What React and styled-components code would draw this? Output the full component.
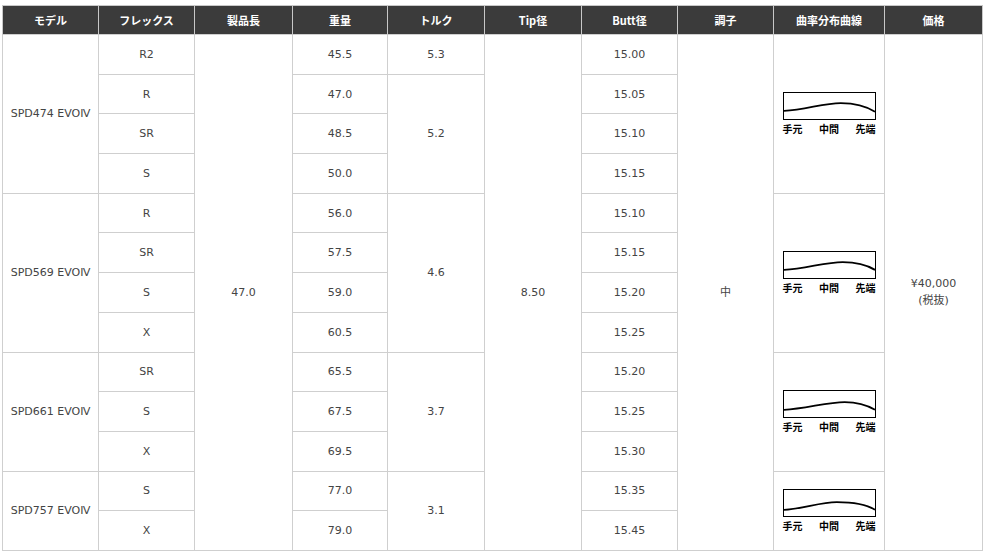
import React from "react";
import styled, { createGlobalStyle } from "styled-components";

const GlobalStyle = createGlobalStyle`
  body {
    margin: 0;
    background: #fff;
    font-family: "DejaVu Sans", "Noto Sans CJK JP", sans-serif;
  }
`;

const models = [
  {
    name: "SPD474 EVOⅣ",
    curve: "M0,18 C22,17 40,10 58,10 C74,10 84,13 93,19",
    rows: [
      { flex: "R2", weight: "45.5", torque: "5.3", span: 1, butt: "15.00" },
      { flex: "R", weight: "47.0", torque: "5.2", span: 3, butt: "15.05" },
      { flex: "SR", weight: "48.5", butt: "15.10" },
      { flex: "S", weight: "50.0", butt: "15.15" },
    ],
  },
  {
    name: "SPD569 EVOⅣ",
    curve: "M0,18 C22,17 42,10 60,10 C76,10 85,13 93,18",
    rows: [
      { flex: "R", weight: "56.0", torque: "4.6", span: 4, butt: "15.10" },
      { flex: "SR", weight: "57.5", butt: "15.15" },
      { flex: "S", weight: "59.0", butt: "15.20" },
      { flex: "X", weight: "60.5", butt: "15.25" },
    ],
  },
  {
    name: "SPD661 EVOⅣ",
    curve: "M0,19 C22,18 44,11 62,11 C76,11 85,14 93,19",
    rows: [
      { flex: "SR", weight: "65.5", torque: "3.7", span: 3, butt: "15.20" },
      { flex: "S", weight: "67.5", butt: "15.25" },
      { flex: "X", weight: "69.5", butt: "15.30" },
    ],
  },
  {
    name: "SPD757 EVOⅣ",
    curve: "M0,20 C20,19 36,12 54,12 C72,12 84,14 93,20",
    rows: [
      { flex: "S", weight: "77.0", torque: "3.1", span: 2, butt: "15.35" },
      { flex: "X", weight: "79.0", butt: "15.45" },
    ],
  },
];

const widths = [96, 96, 98, 95, 97, 97, 96, 96, 111, 98];
const headers = ["モデル", "フレックス", "製品長", "重量", "トルク", "Tip径", "Butt径", "調子", "曲率分布曲線", "価格"];
const totalRows = models.reduce((n, m) => n + m.rows.length, 0);

const Curve = ({ d }) => (
  <ChartWrap>
    <ChartBox>
      <svg width="93" height="26" viewBox="0 0 93 26">
        <path d={d} fill="none" stroke="#000" strokeWidth="1.8" />
      </svg>
    </ChartBox>
    <ChartLabels>
      <span>手元</span>
      <span>中間</span>
      <span>先端</span>
    </ChartLabels>
  </ChartWrap>
);

const App = () => {
  let first = true;
  return (
    <>
      <GlobalStyle />
      <Page>
        <Table>
          <colgroup>
            {widths.map((w, i) => (
              <col key={i} style={{ width: w }} />
            ))}
          </colgroup>
          <thead>
            <tr>
              {headers.map((h) => (
                <Th key={h}>{h}</Th>
              ))}
            </tr>
          </thead>
          <tbody>
            {models.map((m) =>
              m.rows.map((r, i) => {
                const isFirst = first;
                first = false;
                return (
                  <Row key={m.name + r.flex}>
                    {i === 0 && <Td rowSpan={m.rows.length}>{m.name}</Td>}
                    <Td>{r.flex}</Td>
                    {isFirst && <Td rowSpan={totalRows}>47.0</Td>}
                    <Td>{r.weight}</Td>
                    {r.torque && <Td rowSpan={r.span}>{r.torque}</Td>}
                    {isFirst && <Td rowSpan={totalRows}>8.50</Td>}
                    <Td>{r.butt}</Td>
                    {isFirst && <Td rowSpan={totalRows}>中</Td>}
                    {i === 0 && (
                      <Td rowSpan={m.rows.length}>
                        <Curve d={m.curve} />
                      </Td>
                    )}
                    {isFirst && (
                      <Td rowSpan={totalRows}>
                        ¥40,000
                        <br />
                        (税抜)
                      </Td>
                    )}
                  </Row>
                );
              })
            )}
          </tbody>
        </Table>
      </Page>
    </>
  );
};

export default App;

const Page = styled.div`
  padding: 5px 0 0 2px;
`;

const Table = styled.table`
  width: 980px;
  table-layout: fixed;
  border-collapse: collapse;
  border-top: 1px solid #c8c8c8;
`;

const Th = styled.th`
  height: 28px;
  padding: 0;
  background: #3b3b3b;
  color: #fff;
  font-family: "Noto Sans CJK JP", sans-serif;
  font-size: 11px;
  font-weight: bold;
  text-align: center;
  vertical-align: middle;
  border-left: 1px solid #c8c8c8;
  border-right: 1px solid #c8c8c8;
`;

const Row = styled.tr`
  height: 39.7px;
`;

const Td = styled.td`
  padding: 0;
  border: 1px solid #cfcfcf;
  color: #444;
  font-size: 11px;
  line-height: 17px;
  text-align: center;
  vertical-align: middle;
`;

const ChartWrap = styled.div`
  width: 93px;
  margin: 0 auto;
  display: flex;
  flex-direction: column;
  gap: 2px;
`;

const ChartBox = styled.div`
  height: 26px;
  border: 1px solid #000;
  svg {
    display: block;
    width: 100%;
    height: 100%;
  }
`;

const ChartLabels = styled.div`
  display: flex;
  justify-content: space-between;
  color: #000;
  font-family: "Noto Sans CJK JP", sans-serif;
  font-size: 10px;
  font-weight: bold;
  line-height: 13px;
`;
